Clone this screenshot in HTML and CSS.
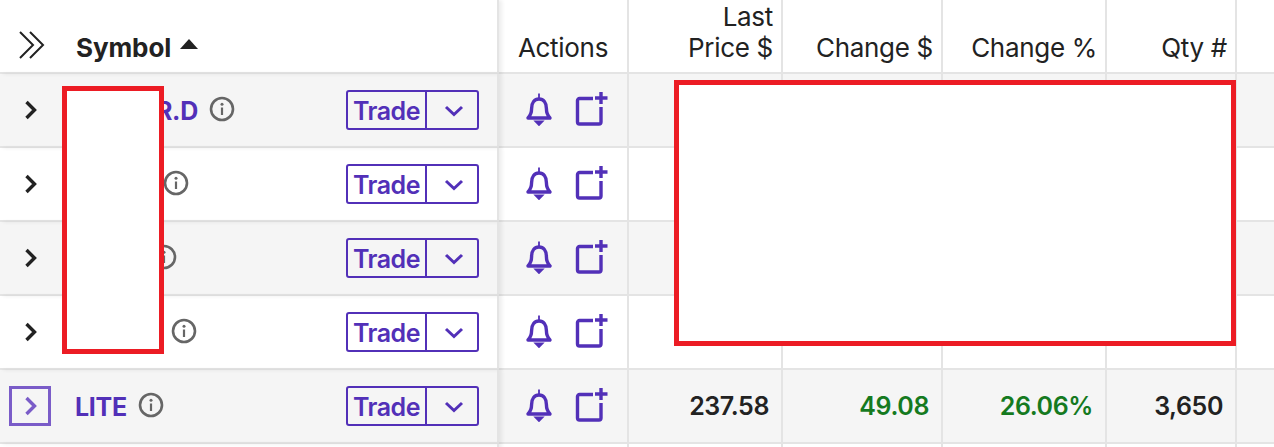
FILE: index.html
```html
<!DOCTYPE html>
<html lang="en">
<head>
<meta charset="UTF-8" />
<meta name="viewport" content="width=device-width, initial-scale=1" />
<title>Positions</title>
<link rel="stylesheet" href="styles.css">
</head>
<body>

<svg class="defs" width="0" height="0" aria-hidden="true">
  <symbol id="i-chev" viewBox="0 0 14 22"><path d="M3 3l8 8-8 8" fill="none" stroke="currentColor" stroke-width="3.4"/></symbol>
  <symbol id="i-info" viewBox="0 0 26 26"><circle cx="13" cy="13" r="11" fill="none" stroke="#666" stroke-width="2.6"/><circle cx="13" cy="8.2" r="1.5" fill="#666"/><path d="M13 11.5v7.5" stroke="#666" stroke-width="2.2"/></symbol>
  <symbol id="i-down" viewBox="0 0 20 12"><path d="M2 2l8 7.5L18 2" fill="none" stroke="currentColor" stroke-width="3"/></symbol>
  <symbol id="i-bell" viewBox="0 0 28 34"><path d="M3 26c3-3 3.600-5 3.600-9.500C6.600 10.500 9.500 7 14 7s7.400 3.500 7.400 9.500c0 4.500.6 6.500 3.600 9.500z" fill="none" stroke="currentColor" stroke-width="3.400" stroke-linejoin="round"/><path d="M14 1.500v5M10.500 29.500h7L14 33z" stroke="currentColor" stroke-width="1.800" fill="currentColor"/></symbol>
  <symbol id="i-add" viewBox="0 0 33 34"><path d="M18 6.500H4.500a2 2 0 0 0-2 2V30a2 2 0 0 0 2 2H24a2 2 0 0 0 2-2V15" fill="none" stroke="currentColor" stroke-width="3.400"/><path d="M26 0v12M20 6h12.500" stroke="currentColor" stroke-width="3.400"/></symbol>
</svg>

<div class="grid">
  <div class="row head">
    <div class="cell sticky">
      <svg class="collapse" viewBox="0 0 28 30"><path d="M2 2l13 13L2 28M12 2l13 13-13 13" fill="none" stroke="#222" stroke-width="2"/></svg>
      <span class="sym-head">Symbol</span><span class="sort"></span>
    </div>
    <div class="cell c-actions">Actions</div>
    <div class="cell c-price">Last<br>Price $</div>
    <div class="cell c-chg">Change $</div>
    <div class="cell c-pct">Change %</div>
    <div class="cell c-qty">Qty #</div>
    <div class="cell c-rest"></div>
  </div>

  <div class="row alt">
    <div class="cell sticky">
      <span class="expand"><svg class="chev"><use href="#i-chev"/></svg></span>
      <span class="sym"><span class="gap-a"></span>R.D</span>
      <svg class="info"><use href="#i-info"/></svg>
      <span class="trade"><span class="trade-main">Trade</span><span class="trade-more"><svg class="down"><use href="#i-down"/></svg></span></span>
    </div>
    <div class="cell c-actions"><svg class="bell"><use href="#i-bell"/></svg><svg class="add"><use href="#i-add"/></svg></div>
    <div class="cell c-price"></div>
    <div class="cell c-chg"></div>
    <div class="cell c-pct"></div>
    <div class="cell c-qty"></div>
    <div class="cell c-rest"></div>
  </div>

  <div class="row">
    <div class="cell sticky">
      <span class="expand"><svg class="chev"><use href="#i-chev"/></svg></span>
      <span class="sym"><span class="gap-b"></span></span>
      <svg class="info"><use href="#i-info"/></svg>
      <span class="trade"><span class="trade-main">Trade</span><span class="trade-more"><svg class="down"><use href="#i-down"/></svg></span></span>
    </div>
    <div class="cell c-actions"><svg class="bell"><use href="#i-bell"/></svg><svg class="add"><use href="#i-add"/></svg></div>
    <div class="cell c-price"></div>
    <div class="cell c-chg"></div>
    <div class="cell c-pct"></div>
    <div class="cell c-qty"></div>
    <div class="cell c-rest"></div>
  </div>

  <div class="row alt">
    <div class="cell sticky">
      <span class="expand"><svg class="chev"><use href="#i-chev"/></svg></span>
      <span class="sym"><span class="gap-c"></span></span>
      <svg class="info"><use href="#i-info"/></svg>
      <span class="trade"><span class="trade-main">Trade</span><span class="trade-more"><svg class="down"><use href="#i-down"/></svg></span></span>
    </div>
    <div class="cell c-actions"><svg class="bell"><use href="#i-bell"/></svg><svg class="add"><use href="#i-add"/></svg></div>
    <div class="cell c-price"></div>
    <div class="cell c-chg"></div>
    <div class="cell c-pct"></div>
    <div class="cell c-qty"></div>
    <div class="cell c-rest"></div>
  </div>

  <div class="row">
    <div class="cell sticky">
      <span class="expand"><svg class="chev"><use href="#i-chev"/></svg></span>
      <span class="sym"><span class="gap-d"></span></span>
      <svg class="info"><use href="#i-info"/></svg>
      <span class="trade"><span class="trade-main">Trade</span><span class="trade-more"><svg class="down"><use href="#i-down"/></svg></span></span>
    </div>
    <div class="cell c-actions"><svg class="bell"><use href="#i-bell"/></svg><svg class="add"><use href="#i-add"/></svg></div>
    <div class="cell c-price"></div>
    <div class="cell c-chg"></div>
    <div class="cell c-pct"></div>
    <div class="cell c-qty"></div>
    <div class="cell c-rest"></div>
  </div>

  <div class="row alt">
    <div class="cell sticky">
      <span class="expand focused"><svg class="chev"><use href="#i-chev"/></svg></span>
      <span class="sym">LITE</span>
      <svg class="info"><use href="#i-info"/></svg>
      <span class="trade"><span class="trade-main">Trade</span><span class="trade-more"><svg class="down"><use href="#i-down"/></svg></span></span>
    </div>
    <div class="cell c-actions"><svg class="bell"><use href="#i-bell"/></svg><svg class="add"><use href="#i-add"/></svg></div>
    <div class="cell c-price num">237.58</div>
    <div class="cell c-chg num up">49.08</div>
    <div class="cell c-pct num up">26.06%</div>
    <div class="cell c-qty num">3,650</div>
    <div class="cell c-rest"></div>
  </div>

  <div class="row">
    <div class="cell sticky"></div>
    <div class="cell c-actions"></div>
    <div class="cell c-price"></div>
    <div class="cell c-chg"></div>
    <div class="cell c-pct"></div>
    <div class="cell c-qty"></div>
    <div class="cell c-rest"></div>
  </div>
</div>

<div class="mask mask-sym"></div>
<div class="mask mask-data"></div>

</body>
</html>
```

FILE: styles.css
```css
html, body {
  height: 447px;
  overflow: hidden;
}
body {
  margin: 0;
  background: #fff;
  color: #222;
  font-family: Inter, "Liberation Sans", sans-serif;
  font-size: 25px;
  position: relative;
}
.defs {
  position: absolute;
}
.grid {
  height: 447px;
  overflow: hidden;
}
.row {
  display: grid;
  grid-template-columns: 499px 130px 154px 160px 164px 130px 1fr;
  grid-template-rows: 72px;
  height: 72px;
  border-bottom: 2px solid #e4e4e4;
  background: #fff;
}
.row.alt {
  background: #f5f5f5;
}
.cell {
  display: flex;
  align-items: center;
  justify-content: flex-end;
  border-right: 2px solid #e4e4e4;
  padding-right: 12px;
  padding-bottom: 2px;
  margin-bottom: -2px;
  text-align: right;
  min-width: 0;
}
.c-rest {
  border-right: 0;
}

/* header */
.head .cell {
  align-items: flex-end;
  padding-bottom: 11px;
  padding-right: 8px;
  line-height: 31px;
  font-size: 26px;
  letter-spacing: -0.3px;
}
.head .c-actions {
  justify-content: center;
  padding-right: 0;
}
.sym-head {
  font-weight: 700;
  margin-left: 30px;
  letter-spacing: -0.1px;
}
.sort {
  width: 0;
  height: 0;
  border-left: 9px solid transparent;
  border-right: 9px solid transparent;
  border-bottom: 10px solid #222;
  margin: 0 0 14px 9px;
}
.collapse {
  width: 28px;
  height: 30px;
  margin-left: 18px;
  margin-bottom: 3px;
  flex: none;
}

/* first column */
.row .sticky {
  justify-content: flex-start;
  padding-right: 0;
  box-shadow: 3px 0 4px rgba(0,0,0,0.07);
  position: relative;
}
.expand {
  width: 42px;
  height: 40px;
  box-sizing: border-box;
  margin-left: 9px;
  display: flex;
  align-items: center;
  justify-content: center;
  color: #222;
  flex: none;
  border: 3px solid transparent;
}
.expand.focused {
  border-color: #7a5cc8;
  color: #7a5cc8;
}
.chev {
  width: 15px;
  height: 22px;
}
.sym {
  margin-left: 24px;
  padding-top: 2px;
  color: #5230b8;
  font-weight: 700;
  display: flex;
  letter-spacing: -0.3px;
}
.gap-a { width: 81px; }
.gap-b { width: 77px; }
.gap-c { width: 65px; }
.gap-d { width: 85px; }
.info {
  width: 26px;
  height: 26px;
  margin-left: 11px;
  flex: none;
  margin-top: -3px;
}
.trade {
  margin-left: auto;
  margin-right: 18px;
  display: flex;
  height: 40px;
  box-sizing: border-box;
  border: 2px solid #5230b8;
  border-radius: 3px;
  color: #5230b8;
  font-weight: 600;
}
.trade-main {
  width: 79px;
  box-sizing: border-box;
  padding-top: 2px;
  border-right: 2px solid #5230b8;
  display: flex;
  align-items: center;
  justify-content: center;
  letter-spacing: -0.5px;
}
.trade-more {
  width: 50px;
  box-sizing: border-box;
  padding: 2px 0 0 3px;
  display: flex;
  align-items: center;
  justify-content: center;
}
.down {
  width: 20px;
  height: 12px;
}

/* actions */
.row:not(.head) .c-actions {
  justify-content: flex-start;
  padding-right: 0;
  color: #5230b8;
}
.bell {
  width: 28px;
  height: 34px;
  margin-left: 26px;
  margin-top: -2px;
}
.add {
  width: 33px;
  height: 34px;
  margin-left: 22px;
  margin-top: -3px;
}

/* numbers */
.num {
  font-weight: 600;
  letter-spacing: -0.4px;
}
.up {
  color: #157a1f;
}

/* redaction boxes over the table */
.mask {
  position: absolute;
  box-sizing: border-box;
  background: #fff;
  border: 5px solid #ec1c24;
}
.mask-sym {
  left: 62px;
  top: 86px;
  width: 102px;
  height: 268px;
}
.mask-data {
  left: 674px;
  top: 80px;
  width: 562px;
  height: 266px;
}
```
